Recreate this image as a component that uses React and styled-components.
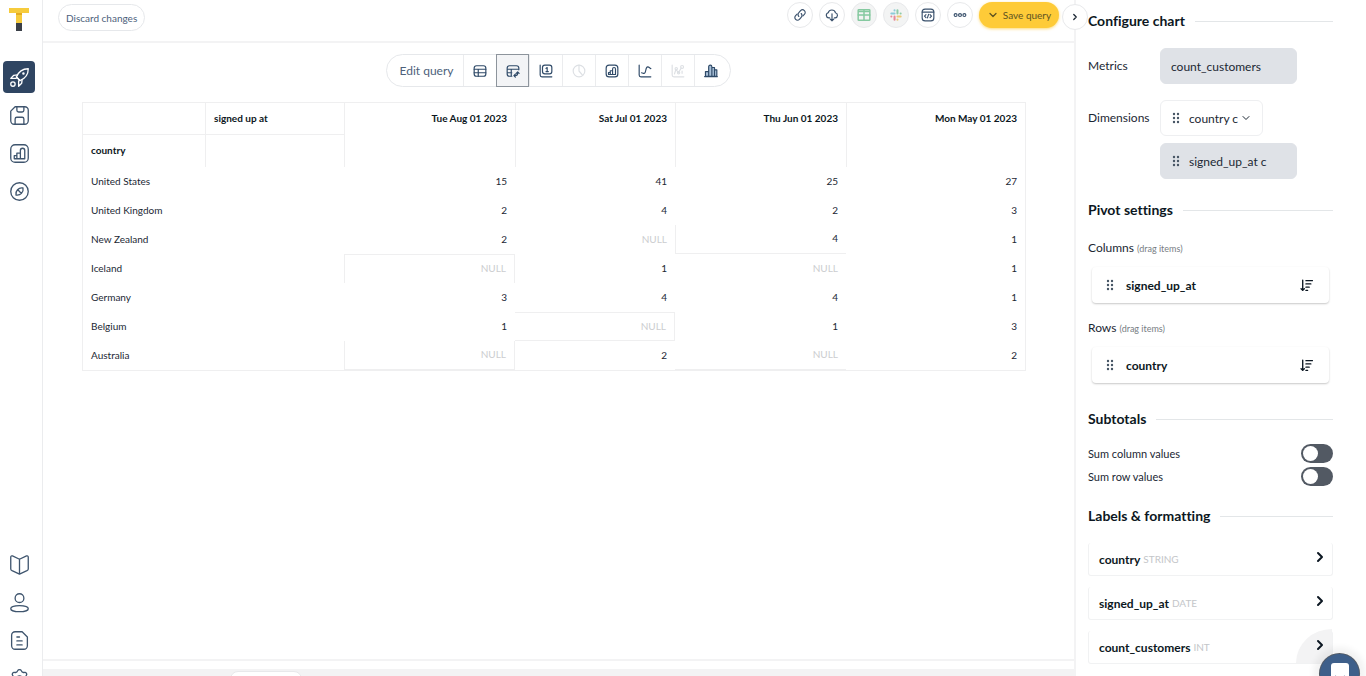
import React, { useState } from "react";
import styled, { createGlobalStyle, css } from "styled-components";
import { ChevronDown, ChevronRight } from "lucide-react";

const GlobalStyle = createGlobalStyle`
  * {
    box-sizing: border-box;
  }
  body {
    margin: 0;
    background: #fff;
    color: #1b2733;
    font-family: Lato, "Liberation Sans", sans-serif;
    font-size: 12px;
    font-variant-ligatures: none;
  }
  button, select, input {
    font: inherit;
    color: inherit;
  }
  button {
    padding: 0;
    border: 0;
    background: none;
    cursor: pointer;
  }
`;

const Shell = styled.div`
  position: relative;
  display: flex;
  height: 100vh;
  overflow: hidden;
`;

const Sidebar = styled.nav`
  flex: none;
  width: 43px;
  padding: 8px 4px 0 0;
  border-right: 1px solid #ebecee;
  display: flex;
  flex-direction: column;
  align-items: center;
`;

const Logo = styled.a`
  height: 53px;
`;

const NavGroup = styled.div`
  display: flex;
  flex-direction: column;
  gap: 6px;

  ${(p) =>
    p.$bottom &&
    css`
      margin-top: auto;
      margin-bottom: -18px;
    `}
`;

const NavButton = styled.button`
  width: 32px;
  height: 32px;
  border-radius: 4px;
  display: grid;
  place-items: center;
  color: ${(p) => (p.$active ? "#fff" : "#3f556e")};
  background: ${(p) => (p.$active ? "#2f4562" : "none")};
`;

const Main = styled.main`
  flex: 1;
  min-width: 0;
  display: flex;
  flex-direction: column;
`;

const TopBar = styled.header`
  flex: none;
  height: 43px;
  padding: 2px 15px 0;
  border-bottom: 2px solid #f3f3f4;
  display: flex;
  justify-content: space-between;
  align-items: flex-start;
`;

const DiscardButton = styled.button`
  height: 27px;
  margin-top: 2px;
  padding: 0 7px;
  border: 1px solid #e6e8eb;
  border-radius: 14px;
  font-size: 10px;
  color: #4d617b;
`;

const Actions = styled.div`
  display: flex;
  gap: 6px;
`;

const RoundButton = styled.button`
  width: 26px;
  height: 26px;
  border: 1px solid #e8e9eb;
  border-radius: 50%;
  display: grid;
  place-items: center;
  color: #3b526d;
  background: ${(p) => (p.$muted ? "#f3f4f4" : "#fff")};
`;

const SaveButton = styled.button`
  width: 80px;
  height: 26px;
  border-radius: 13px;
  display: flex;
  align-items: center;
  justify-content: center;
  gap: 4px;
  font-size: 10px;
  color: #5d5322;
  background: #fecb38;
  box-shadow: 0 1px 3px rgba(254, 203, 56, 0.7);
`;

const VizBar = styled.div`
  align-self: center;
  height: 33px;
  margin: 11px 0 15px;
  display: flex;
  border: 1px solid #e6e8eb;
  border-radius: 17px;
`;

const EditQuery = styled.button`
  width: 76px;
  padding-left: 3px;
  color: #4d617b;
`;

const VizButton = styled.button`
  width: 33px;
  display: grid;
  place-items: center;
  color: #2f4a68;
  border-left: 1px solid #ebecee;

  &:last-child {
    width: 36px;
    padding-right: 3px;
  }

  &:disabled {
    color: #dde0e4;
    cursor: default;
  }

  ${(p) =>
    p.$active &&
    css`
      margin: -1px 0;
      border: 1px solid #8d949c;
      background: #f3f4f6;
    `}
`;

const TableArea = styled.section`
  flex: 1;
  min-height: 0;
  padding: 0 48px 0 39px;
`;

const PivotTable = styled.table`
  width: 100%;
  table-layout: fixed;
  border-collapse: separate;
  border-spacing: 0;
  border: 1px solid #efeff0;
  font-size: 10px;
`;

const line = "1px solid #efeff0";

const Cell = styled.td`
  height: 29px;
  padding: 0 8px 2px;
  text-align: right;
  color: ${(p) => (p.$empty ? "#cbcdcf" : "#1b2733")};
  border-top: ${(p) => (p.$edges?.includes("t") ? line : "0")};
  border-right: ${(p) => (p.$edges?.includes("r") ? line : "0")};
  border-bottom: ${(p) => (p.$edges?.includes("b") ? line : "0")};
  border-left: ${(p) => (p.$edges?.includes("l") ? line : "0")};
`;

const RowLabel = styled(Cell).attrs({ as: "th", scope: "row" })`
  text-align: left;
  font-weight: 400;
`;

const HeadCell = styled.th`
  height: 32px;
  padding: ${(p) => (p.rowSpan ? "9px 8px" : "0 8px 2px")};
  text-align: ${(p) => (p.rowSpan ? "right" : "left")};
  vertical-align: ${(p) => (p.rowSpan ? "top" : "middle")};
  font-weight: 700;
  color: #0c1722;
  border-left: ${(p) => (p.$first ? "0" : line)};
  border-bottom: ${(p) => (p.$under ? line : "0")};
`;

const Footer = styled.footer`
  flex: none;
  height: 17px;
  padding-top: 8px;
  border-top: 2px solid #f3f3f4;
`;

const FooterStrip = styled.div`
  height: 7px;
  padding: 2px 0 0 187px;
  background: #f3f3f4;
  overflow: hidden;
`;

const FooterTab = styled.div`
  width: 72px;
  height: 16px;
  border: 1px solid #e8e9eb;
  border-radius: 8px;
  background: #fff;
`;

const Panel = styled.aside`
  position: relative;
  flex: none;
  width: 292px;
  padding: 11px 33px 0 12px;
  border-left: 2px solid #f3f3f4;
`;

const CollapseButton = styled(RoundButton)`
  position: absolute;
  top: 4px;
  left: -14px;
  color: #1b2733;
`;

const Group = styled.section`
  margin-bottom: ${(p) => p.$space}px;
`;

const GroupTitle = styled.h2`
  display: flex;
  align-items: center;
  gap: 10px;
  margin: 0 0 ${(p) => p.$space}px;
  font-size: 14px;
  line-height: 20px;
  color: #0c1722;

  &::after {
    content: "";
    flex: 1;
    height: 1px;
    background: #e3e6e8;
  }
`;

const Field = styled.div`
  display: grid;
  grid-template-columns: 72px 1fr;
  margin-bottom: 16px;
`;

const FieldLabel = styled.label`
  line-height: 36px;
`;

const FieldList = styled.div`
  display: flex;
  flex-direction: column;
  align-items: flex-start;
  gap: 7px;
`;

const Picker = styled.div`
  display: flex;
  align-items: center;
  gap: 4px;
  width: ${(p) => (p.$locked ? 137 : 103)}px;
  height: 36px;
  padding: 0 10px;
  border: 1px solid ${(p) => (p.$locked ? "#dfe2e7" : "#eeeff1")};
  border-radius: 6px;
  background: ${(p) => (p.$locked ? "#dfe2e7" : "#fff")};

  svg {
    flex: none;
  }
  svg:first-child {
    margin-left: -4px;
  }
  svg:last-child {
    margin-left: -6px;
  }
`;

const PickerSelect = styled.select`
  appearance: none;
  flex: 1;
  min-width: 0;
  padding: 0;
  border: 0;
  background: none;
  opacity: 1;
`;

const ListLabel = styled.h3`
  margin: 0 0 8px;
  font-size: 12px;
  font-weight: 400;
  line-height: 20px;
`;

const Hint = styled.small`
  font-size: 9px;
  color: #777d83;
`;

const DragCard = styled.div`
  display: flex;
  align-items: center;
  gap: 7px;
  height: 36px;
  margin: 0 4px 15px;
  padding: 0 16px 0 9px;
  border-radius: 4px;
  font-weight: 700;
  color: #0c1722;
  box-shadow: 0 1px 2px rgba(0, 0, 0, 0.22);

  button {
    display: flex;
    margin-left: auto;
  }
`;

const ToggleRow = styled.label`
  display: flex;
  align-items: center;
  justify-content: space-between;
  margin-bottom: 4px;
  font-size: 11px;
`;

const Toggle = styled.input`
  appearance: none;
  width: 32px;
  height: 19px;
  margin: 0;
  padding: 2px;
  border-radius: 10px;
  background: #525963;

  &::before {
    content: "";
    display: block;
    width: 15px;
    height: 15px;
    border-radius: 50%;
    background: #fff;
  }
  &:checked::before {
    margin-left: 13px;
  }
`;

const FormatRow = styled.button`
  position: relative;
  display: flex;
  align-items: center;
  gap: 3px;
  width: 100%;
  height: 33px;
  margin-bottom: 11px;
  padding: 0 4px 0 10px;
  border: 1px solid #f1f2f3;
  border-top: 0;
  border-radius: 3px;
  color: #0c1722;
  font-weight: 700;

  svg {
    margin-bottom: 4px;
  }
`;

const TypeName = styled.span`
  flex: 1;
  text-align: left;
  font-size: 10px;
  font-weight: 400;
  color: #c4c6c9;
`;

const CornerShade = styled.span`
  position: absolute;
  right: 0;
  bottom: 0;
  width: 36px;
  height: 34px;
  border-top-left-radius: 100%;
  background: #f3f3f4;
  z-index: -1;
`;

const ChatButton = styled.button`
  position: absolute;
  right: 7px;
  bottom: -17px;
  width: 39px;
  height: 39px;
  border-radius: 50%;
  display: grid;
  place-items: center;
  background: #3e5f8a;
  box-shadow: 0 0 0 1px #535b66, 0 0 6px 7px rgba(0, 0, 0, 0.05);
`;

const Icon = ({ size = 22, width = 1.5, children }) => (
  <svg
    width={size}
    height={size}
    viewBox="0 0 24 24"
    fill="none"
    stroke="currentColor"
    strokeWidth={width}
    strokeLinecap="round"
    strokeLinejoin="round"
    aria-hidden="true"
  >
    {children}
  </svg>
);

const Grip = () => (
  <svg width="18" height="14" viewBox="0 0 18 14" fill="#465464" aria-hidden="true">
    {[3, 7, 11].map((y) => (
      <React.Fragment key={y}>
        <circle cx="7" cy={y} r="1.2" />
        <circle cx="11" cy={y} r="1.2" />
      </React.Fragment>
    ))}
  </svg>
);

const barsInBox = (
  <>
    <rect x="2" y="2" width="20" height="20" rx="5" />
    <path d="M6 18v-3.5h3V18zM9 18v-6.5h4V18zM13 18V8.5c0-1.5 1-2.5 2.500-2.500S18 7 18 8.500V18zM6 18h12" />
  </>
);

const topNav = [
  {
    name: "Launch",
    art: (
      <>
        <path d="M8.500 11.500C11 5 15 2 22 2c0 7-3 11-9.500 13.500z" />
        <path d="M9.500 9 5.500 9.500 2 13l6 0M15 14.500 14.500 18.500 11 22v-6M8.500 11.500l4 4" />
        <circle cx="16.500" cy="7.500" r=".7" />
        <circle cx="4.500" cy="19.500" r="2.500" />
      </>
    ),
  },
  {
    name: "Saved queries",
    art: (
      <>
        <path d="M7 2h11a4 4 0 0 1 4 4v12a4 4 0 0 1-4 4H6a4 4 0 0 1-4-4V7z" />
        <path d="M9 2v4a2 2 0 0 0 2 2h4a2 2 0 0 0 2-2V2M7 22v-6a2 2 0 0 1 2-2h6a2 2 0 0 1 2 2v6" />
      </>
    ),
  },
  { name: "Dashboards", art: barsInBox },
  {
    name: "Explore",
    art: (
      <>
        <circle cx="12" cy="12" r="10" />
        <path d="M8 16c-1-4.500 3-9 8-8 1 4.500-3 9-8 8zM10 10l4 4" />
      </>
    ),
  },
];

const bottomNav = [
  {
    name: "Docs",
    art: (
      <path d="M12 6 4 2.200C3 1.800 2 2.300 2 3.500V17c0 1 .5 1.500 1.500 2L12 23l8.500-4c1-.5 1.500-1 1.500-2V3.500c0-1.200-1-1.700-2-1.300zM12 6v17" />
    ),
  },
  {
    name: "Account",
    art: (
      <>
        <circle cx="12" cy="7" r="5" />
        <ellipse cx="12" cy="19" rx="10" ry="3.500" />
      </>
    ),
  },
  {
    name: "Reports",
    art: (
      <>
        <path d="M7 2h8l6 6v10a4 4 0 0 1-4 4H7a4 4 0 0 1-4-4V6a4 4 0 0 1 4-4z" />
        <path d="M9 8h3M9 12.500h6M9 17h6" />
      </>
    ),
  },
  {
    name: "Settings",
    art: (
      <>
        <path d="M10 3c.5-1.500 3.500-1.500 4 0 .6 1.800 2 2.500 3.800 2 1.700-.5 3.200 2 2 3.500-1.200 1.500-1.200 5.500 0 7s-.3 4-2 3.500c-1.800-.5-3.200.2-3.800 2-.5 1.500-3.500 1.500-4 0-.6-1.800-2-2.500-3.800-2-1.700.5-3.200-2-2-3.500s1.200-5.500 0-7 .3-4 2-3.500C8 5.500 9.400 4.800 10 3z" />
        <circle cx="12" cy="12" r="3" />
      </>
    ),
  },
];

const actions = [
  {
    name: "Copy link",
    art: (
      <>
        <path d="M10 14.500a4.500 4.500 0 0 1 0-6.500l3-3.500a4.500 4.500 0 0 1 6.500 6.500l-2.500 2.500" />
        <path d="M14 9.500a4.500 4.500 0 0 1 0 6.500l-3 3.500A4.500 4.500 0 0 1 4.500 13L7 10.500" />
      </>
    ),
  },
  {
    name: "Download",
    art: <path d="M8 17H6.500a4.500 4.500 0 0 1-1-8.800A6.500 6.500 0 0 1 18 8.200a4.500 4.500 0 0 1-.5 8.800H16M12 10v12M9 19l3 3 3-3" />,
  },
  {
    name: "Send to Sheets",
    muted: true,
    art: (
      <g stroke="#85c9a0" strokeWidth="2.500">
        <rect x="2" y="3" width="20" height="18" rx="1" />
        <path d="M2 12h20M12 3v18M3 6h18" />
      </g>
    ),
  },
  {
    name: "Send to Slack",
    muted: true,
    art: (
      <g strokeWidth="3.500">
        <path stroke="#8ccbd9" d="M4 9.500h5.500M9.500 4v.1" />
        <path stroke="#8ecba8" d="M14.500 4v5.500M20 9.500h-.1" />
        <path stroke="#ecc878" d="M14.500 14.500H20M14.500 20v-.1" />
        <path stroke="#e58a9a" d="M9.500 14.500V20M4 14.500h.1" />
      </g>
    ),
  },
  {
    name: "Embed",
    art: (
      <>
        <rect x="2" y="2" width="20" height="20" rx="5" />
        <path d="M2 7h20M8.500 11.500 6 14l2.500 2.500M15.500 11.500 18 14l-2.500 2.500M13 11l-2 6" />
      </>
    ),
  },
  {
    name: "More",
    art: (
      <>
        <circle cx="4.500" cy="12" r="2.500" />
        <circle cx="12" cy="12" r="2.500" />
        <circle cx="19.500" cy="12" r="2.500" />
      </>
    ),
  },
];

const vizTypes = [
  {
    name: "Table",
    art: (
      <>
        <rect x="2" y="3" width="20" height="18" rx="4" />
        <path d="M2 9h20M2 15h20M9 9v12" />
      </>
    ),
  },
  {
    name: "Pivot table",
    art: (
      <>
        <path d="M10 21H6a4 4 0 0 1-4-4V7a4 4 0 0 1 4-4h12a4 4 0 0 1 4 4v3M2 9h20M2 15h8M9 9v12" />
        <path d="M14 20h2a4 4 0 0 0 4-4v-2M17.500 16l2.500-2.500 2.500 2.500M16 17.500 13.500 20l2.500 2.500" />
      </>
    ),
  },
  {
    name: "Single value",
    art: (
      <>
        <path d="M2 2v17a3 3 0 0 0 3 3h17" />
        <rect x="6" y="2" width="16" height="15" rx="4" />
        <path d="M12 7.500 14 6v7M12 13h4" />
      </>
    ),
  },
  {
    name: "Pie",
    disabled: true,
    art: (
      <>
        <circle cx="12" cy="12" r="10" />
        <path d="M12 2v10l6 7" />
      </>
    ),
  },
  { name: "Bars", art: barsInBox },
  {
    name: "Line",
    art: <path d="M2 2v17a3 3 0 0 0 3 3h17M6 15c3 0 4 3 6 0s1-10 4.500-10S19 7 22 8" />,
  },
  {
    name: "Scatter",
    disabled: true,
    art: (
      <>
        <path d="M2 2v17a3 3 0 0 0 3 3h17M6 17l2.500-8 4 6 5-8" />
        <circle cx="9" cy="8" r="2" />
        <circle cx="13" cy="15" r="2" />
        <circle cx="19" cy="5" r="2.500" />
        <path d="M19 12v4" />
      </>
    ),
  },
  {
    name: "Column",
    art: (
      <path
        fill="#a9c0d8"
        d="M2.500 21v-8h5.500v8zM8 21V5c0-1.800 1-3 2.800-3s2.700 1.200 2.700 3v16zM13.500 21V6H18v15zM18 21V10h4v11zM1 21.500h22"
      />
    ),
  },
];

const dates = ["Tue Aug 01 2023", "Sat Jul 01 2023", "Thu Jun 01 2023", "Mon May 01 2023"];

const rows = [
  { country: "United States", values: [15, 41, 25, 27] },
  { country: "United Kingdom", values: [2, 4, 2, 3] },
  { country: "New Zealand", values: [2, null, 4, 1], edges: ["", "", "lb"] },
  { country: "Iceland", values: [null, 1, null, 1], edges: ["tlr"] },
  { country: "Germany", values: [3, 4, 4, 1] },
  { country: "Belgium", values: [1, null, 1, 3], edges: ["", "trb"] },
  { country: "Australia", values: [null, 2, null, 2], edges: ["lrb", "", "b"] },
];

const formats = [
  { field: "country", type: "STRING" },
  { field: "signed_up_at", type: "DATE" },
  { field: "count_customers", type: "INT", shaded: true },
];

function PivotResult() {
  return (
    <PivotTable>
      <colgroup>
        <col width="122" />
        <col width="139" />
        <col width="171" />
        <col width="160" />
        <col width="171" />
        <col />
      </colgroup>
      <thead>
        <tr>
          <HeadCell as="td" $first $under />
          <HeadCell $under>signed up at</HeadCell>
          {dates.map((date) => (
            <HeadCell key={date} rowSpan={2}>
              {date}
            </HeadCell>
          ))}
        </tr>
        <tr>
          <HeadCell $first>country</HeadCell>
          <HeadCell as="td" />
        </tr>
      </thead>
      <tbody>
        {rows.map(({ country, values, edges = [] }) => (
          <tr key={country}>
            <RowLabel colSpan={2}>{country}</RowLabel>
            {values.map((value, i) => (
              <Cell key={dates[i]} $empty={value === null} $edges={edges[i]}>
                {value === null ? "NULL" : value}
              </Cell>
            ))}
          </tr>
        ))}
      </tbody>
    </PivotTable>
  );
}

function DragItem({ name }) {
  return (
    <DragCard>
      <Grip />
      {name}
      <button aria-label={`Sort ${name}`}>
        <Icon size={13} width={2.5}>
          <path d="M5 2v19M2 18l3 3 3-3M11 3h12M11 9h9M11 15h6M11 21h3" />
        </Icon>
      </button>
    </DragCard>
  );
}

function ConfigPanel() {
  const [sumColumns, setSumColumns] = useState(false);
  const [sumRows, setSumRows] = useState(false);

  return (
    <Panel>
      <CollapseButton aria-label="Collapse panel">
        <ChevronRight size={10} strokeWidth={3} />
      </CollapseButton>

      <Group $space={21}>
        <GroupTitle $space={17}>Configure chart</GroupTitle>
        <Field>
          <FieldLabel htmlFor="metric">Metrics</FieldLabel>
          <Picker $locked>
            <PickerSelect id="metric" disabled>
              <option>count_customers</option>
            </PickerSelect>
          </Picker>
        </Field>
        <Field>
          <FieldLabel htmlFor="dimension">Dimensions</FieldLabel>
          <FieldList>
            <Picker>
              <Grip />
              <PickerSelect id="dimension">
                <option>country c</option>
              </PickerSelect>
              <ChevronDown size={12} />
            </Picker>
            <Picker $locked>
              <Grip />
              <PickerSelect aria-label="Second dimension" disabled>
                <option>signed_up_at c</option>
              </PickerSelect>
            </Picker>
          </FieldList>
        </Field>
      </Group>

      <Group $space={26}>
        <GroupTitle $space={18}>Pivot settings</GroupTitle>
        <ListLabel>
          Columns <Hint>(drag items)</Hint>
        </ListLabel>
        <DragItem name="signed_up_at" />
        <ListLabel>
          Rows <Hint>(drag items)</Hint>
        </ListLabel>
        <DragItem name="country" />
      </Group>

      <Group $space={20}>
        <GroupTitle $space={15}>Subtotals</GroupTitle>
        <ToggleRow>
          Sum column values
          <Toggle
            type="checkbox"
            role="switch"
            checked={sumColumns}
            onChange={(e) => setSumColumns(e.target.checked)}
          />
        </ToggleRow>
        <ToggleRow>
          Sum row values
          <Toggle
            type="checkbox"
            role="switch"
            checked={sumRows}
            onChange={(e) => setSumRows(e.target.checked)}
          />
        </ToggleRow>
      </Group>

      <Group $space={0}>
        <GroupTitle $space={17}>Labels &amp; formatting</GroupTitle>
        {formats.map(({ field, type, shaded }) => (
          <FormatRow key={field}>
            {shaded && <CornerShade />}
            {field}
            <TypeName>{type}</TypeName>
            <ChevronRight size={16} strokeWidth={3} />
          </FormatRow>
        ))}
      </Group>
    </Panel>
  );
}

function App() {
  const [viz, setViz] = useState("Pivot table");

  return (
    <Shell>
      <GlobalStyle />
      <Sidebar>
        <Logo href="#" aria-label="Home">
          <svg width="20" height="23" viewBox="0 0 20 23">
            <path fill="#f6cb3c" d="M0 0h20v5h-7v10H7V5H0z" />
            <path fill="#e3ab22" d="M7 5h6v2H7z" />
            <path fill="#3a3f48" d="M7 15h6v8H7z" />
          </svg>
        </Logo>
        <NavGroup>
          {topNav.map(({ name, art }, i) => (
            <NavButton key={name} aria-label={name} $active={i === 0}>
              <Icon size={21}>{art}</Icon>
            </NavButton>
          ))}
        </NavGroup>
        <NavGroup $bottom>
          {bottomNav.map(({ name, art }) => (
            <NavButton key={name} aria-label={name}>
              <Icon size={21}>{art}</Icon>
            </NavButton>
          ))}
        </NavGroup>
      </Sidebar>

      <Main>
        <TopBar>
          <DiscardButton>Discard changes</DiscardButton>
          <Actions>
            {actions.map(({ name, muted, art }) => (
              <RoundButton key={name} aria-label={name} $muted={muted}>
                <Icon size={14} width={2}>
                  {art}
                </Icon>
              </RoundButton>
            ))}
            <SaveButton>
              <ChevronDown size={12} strokeWidth={2.5} />
              Save query
            </SaveButton>
          </Actions>
        </TopBar>

        <VizBar>
          <EditQuery>Edit query</EditQuery>
          {vizTypes.map(({ name, disabled, art }) => (
            <VizButton
              key={name}
              aria-label={name}
              disabled={disabled}
              $active={viz === name}
              onClick={() => setViz(name)}
            >
              <Icon size={14} width={2}>
                {art}
              </Icon>
            </VizButton>
          ))}
        </VizBar>

        <TableArea>
          <PivotResult />
        </TableArea>

        <Footer>
          <FooterStrip>
            <FooterTab />
          </FooterStrip>
        </Footer>
      </Main>

      <ConfigPanel />

      <ChatButton aria-label="Open chat">
        <svg width="18" height="22" viewBox="0 0 18 22">
          <rect width="18" height="20" rx="3" fill="#fff" />
          <path d="M4 13q5 4 10 0" fill="none" stroke="#3e5f8a" strokeWidth="1.5" />
        </svg>
      </ChatButton>
    </Shell>
  );
}

export default App;
